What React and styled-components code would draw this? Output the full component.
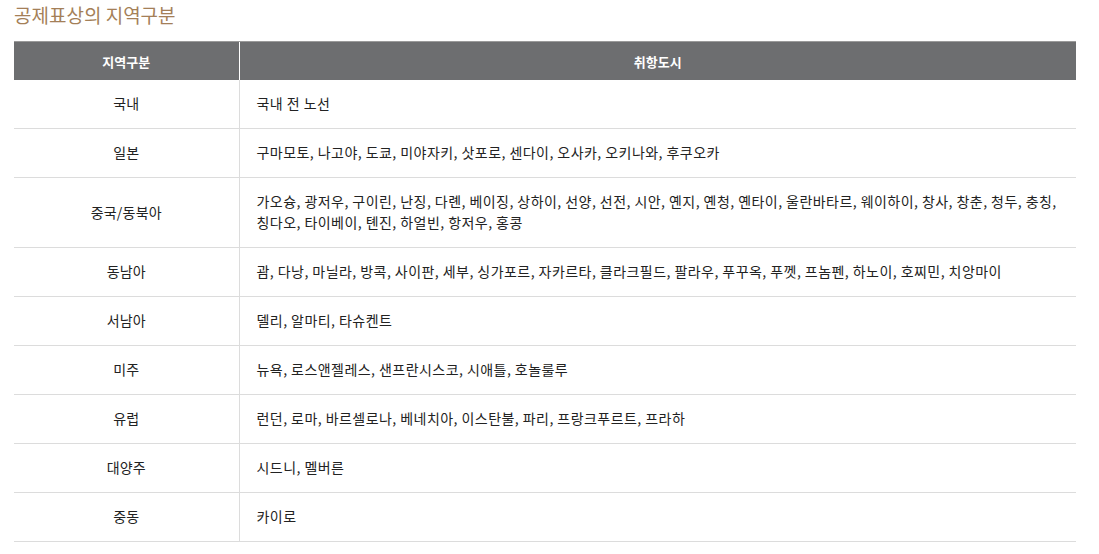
import React from "react";
import styled, { createGlobalStyle } from "styled-components";

const GlobalStyle = createGlobalStyle`
  body {
    margin: 0;
    background: #fff;
    font-family: "Noto Sans CJK KR", "Noto Sans", sans-serif;
    color: #222;
  }
`;

const rows = [
  ["국내", "국내 전 노선"],
  ["일본", "구마모토, 나고야, 도쿄, 미야자키, 삿포로, 센다이, 오사카, 오키나와, 후쿠오카"],
  [
    "중국/동북아",
    "가오슝, 광저우, 구이린, 난징, 다롄, 베이징, 상하이, 선양, 선전, 시안, 옌지, 옌청, 옌타이, 울란바타르, 웨이하이, 창사, 창춘, 청두, 충칭, 칭다오, 타이베이, 톈진, 하얼빈, 항저우, 홍콩",
  ],
  ["동남아", "괌, 다낭, 마닐라, 방콕, 사이판, 세부, 싱가포르, 자카르타, 클라크필드, 팔라우, 푸꾸옥, 푸껫, 프놈펜, 하노이, 호찌민, 치앙마이"],
  ["서남아", "델리, 알마티, 타슈켄트"],
  ["미주", "뉴욕, 로스앤젤레스, 샌프란시스코, 시애틀, 호놀룰루"],
  ["유럽", "런던, 로마, 바르셀로나, 베네치아, 이스탄불, 파리, 프랑크푸르트, 프라하"],
  ["대양주", "시드니, 멜버른"],
  ["중동", "카이로"],
];

export default function App() {
  return (
    <>
      <GlobalStyle />
      <Page>
        <Title>공제표상의 지역구분</Title>
        <Table>
          <colgroup>
            <col style={{ width: 225 }} />
            <col />
          </colgroup>
          <thead>
            <tr>
              <Th>지역구분</Th>
              <Th>취항도시</Th>
            </tr>
          </thead>
          <tbody>
            {rows.map(([region, cities]) => (
              <tr key={region}>
                <RegionCell>{region}</RegionCell>
                <CityCell>{cities}</CityCell>
              </tr>
            ))}
          </tbody>
        </Table>
      </Page>
    </>
  );
}

const Page = styled.div`
  padding: 0 23px 0 14px;
`;

const Title = styled.h2`
  margin: 0;
  padding-top: 2px;
  height: 39px;
  font-size: 19px;
  font-weight: 400;
  line-height: 26px;
  color: #a47f58;
`;

const Table = styled.table`
  width: 100%;
  border-collapse: collapse;
  table-layout: fixed;
  font-size: 14px;
  line-height: 21px;
  word-break: keep-all;
`;

const Th = styled.th`
  height: 38px;
  padding: 0;
  background: #6d6e70;
  border-top: 1px solid #9a9a9a;
  color: #fff;
  font-size: 13px;
  font-weight: 700;
  text-align: center;
  & + & {
    border-left: 1px solid #fff;
  }
`;

const RegionCell = styled.td`
  padding: 13px 10px 14px;
  text-align: center;
  letter-spacing: 0.2px;
  border-bottom: 1px solid #dcdcdc;
  border-right: 1px solid #dcdcdc;
  vertical-align: middle;
`;

const CityCell = styled.td`
  padding: 13px 16px 14px 17px;
  letter-spacing: 0.45px;
  border-bottom: 1px solid #dcdcdc;
  vertical-align: middle;
`;
